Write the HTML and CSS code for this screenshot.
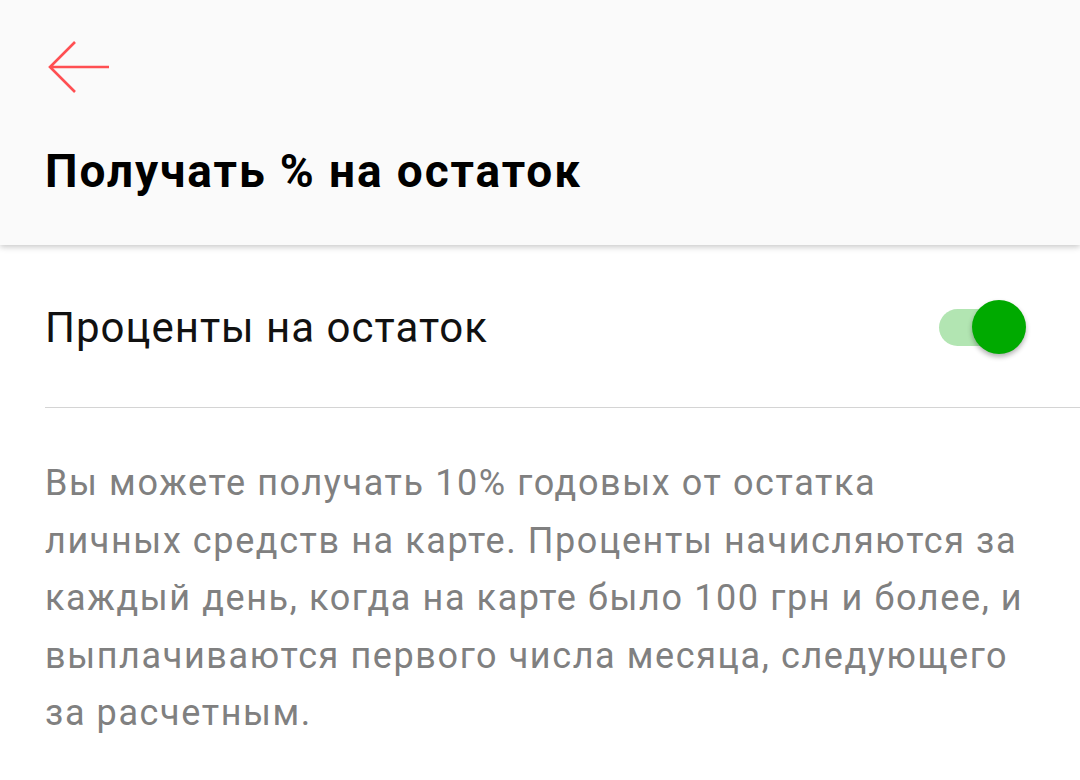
FILE: index.html
```html
<!DOCTYPE html>
<html lang="ru">

<head>
    <meta charset="UTF-8">
    <meta name="viewport" content="width=device-width, initial-scale=1.0">
    <title>Получать % на остаток</title>
    <link rel="stylesheet" href="styles.css">
</head>

<body>
    <header class="toolbar">
        <button class="back-btn" aria-label="Назад">
            <svg width="64" height="58" viewBox="0 0 64 58">
                <path d="M62 29H4M28 4L3 29l25 25" fill="none" stroke="#ff4f52" stroke-width="2.6" />
            </svg>
        </button>
        <h1 class="title">Получать % на остаток</h1>
    </header>

    <main class="content">
        <div class="setting-row">
            <span class="setting-label">Проценты на остаток</span>
            <label class="switch">
                <input type="checkbox" checked>
                <span class="track"></span>
                <span class="thumb"></span>
            </label>
        </div>
        <p class="description">Вы можете получать 10% годовых от остатка<br>
            личных средств на карте. Проценты начисляются за<br>
            каждый день, когда на карте было 100 грн и более, и<br>
            выплачиваются первого числа месяца, следующего<br>
            за расчетным.</p>
    </main>
</body>

</html>
```

FILE: styles.css
```css
body {
    font-family: Roboto, "Noto Sans", sans-serif;
    background-color: #ffffff;
    margin: 0;
    padding: 0;
}

.toolbar {
    background-color: #fafafa;
    height: 245px;
    box-sizing: border-box;
    padding: 38px 45px 0 45px;
    box-shadow: 0 2px 6px rgba(0, 0, 0, 0.22);
    position: relative;
}

.back-btn {
    display: block;
    border: none;
    background: none;
    padding: 0;
    margin-left: 2px;
    height: 58px;
}

.back-btn svg {
    display: block;
}

.title {
    margin: 48px 0 0 0;
    font-size: 46px;
    line-height: normal;
    letter-spacing: 1.9px;
    font-weight: 700;
    color: #000000;
}

.content {
    padding-left: 45px;
}

.setting-row {
    display: flex;
    align-items: center;
    justify-content: space-between;
    height: 163px;
    box-sizing: border-box;
    padding: 2px 54px 0 0;
    border-bottom: 1px solid #d4d4d4;
}

.setting-label {
    font-size: 42px;
    letter-spacing: 1px;
    color: #111111;
}

.switch {
    position: relative;
    width: 87px;
    height: 54px;
    display: block;
}

.switch input {
    display: none;
}

.track {
    position: absolute;
    left: 0;
    top: 9px;
    width: 80px;
    height: 37px;
    border-radius: 19px;
    background-color: #b2e5b2;
}

.thumb {
    position: absolute;
    right: 0;
    top: 0;
    width: 54px;
    height: 54px;
    border-radius: 50%;
    background-color: #00aa00;
    box-shadow: 0 3px 5px rgba(0, 0, 0, 0.3);
}

.description {
    margin: 47px 0 0 0;
    font-size: 36px;
    line-height: 57.5px;
    letter-spacing: 1.6px;
    white-space: nowrap;
    color: #808080;
}
```
